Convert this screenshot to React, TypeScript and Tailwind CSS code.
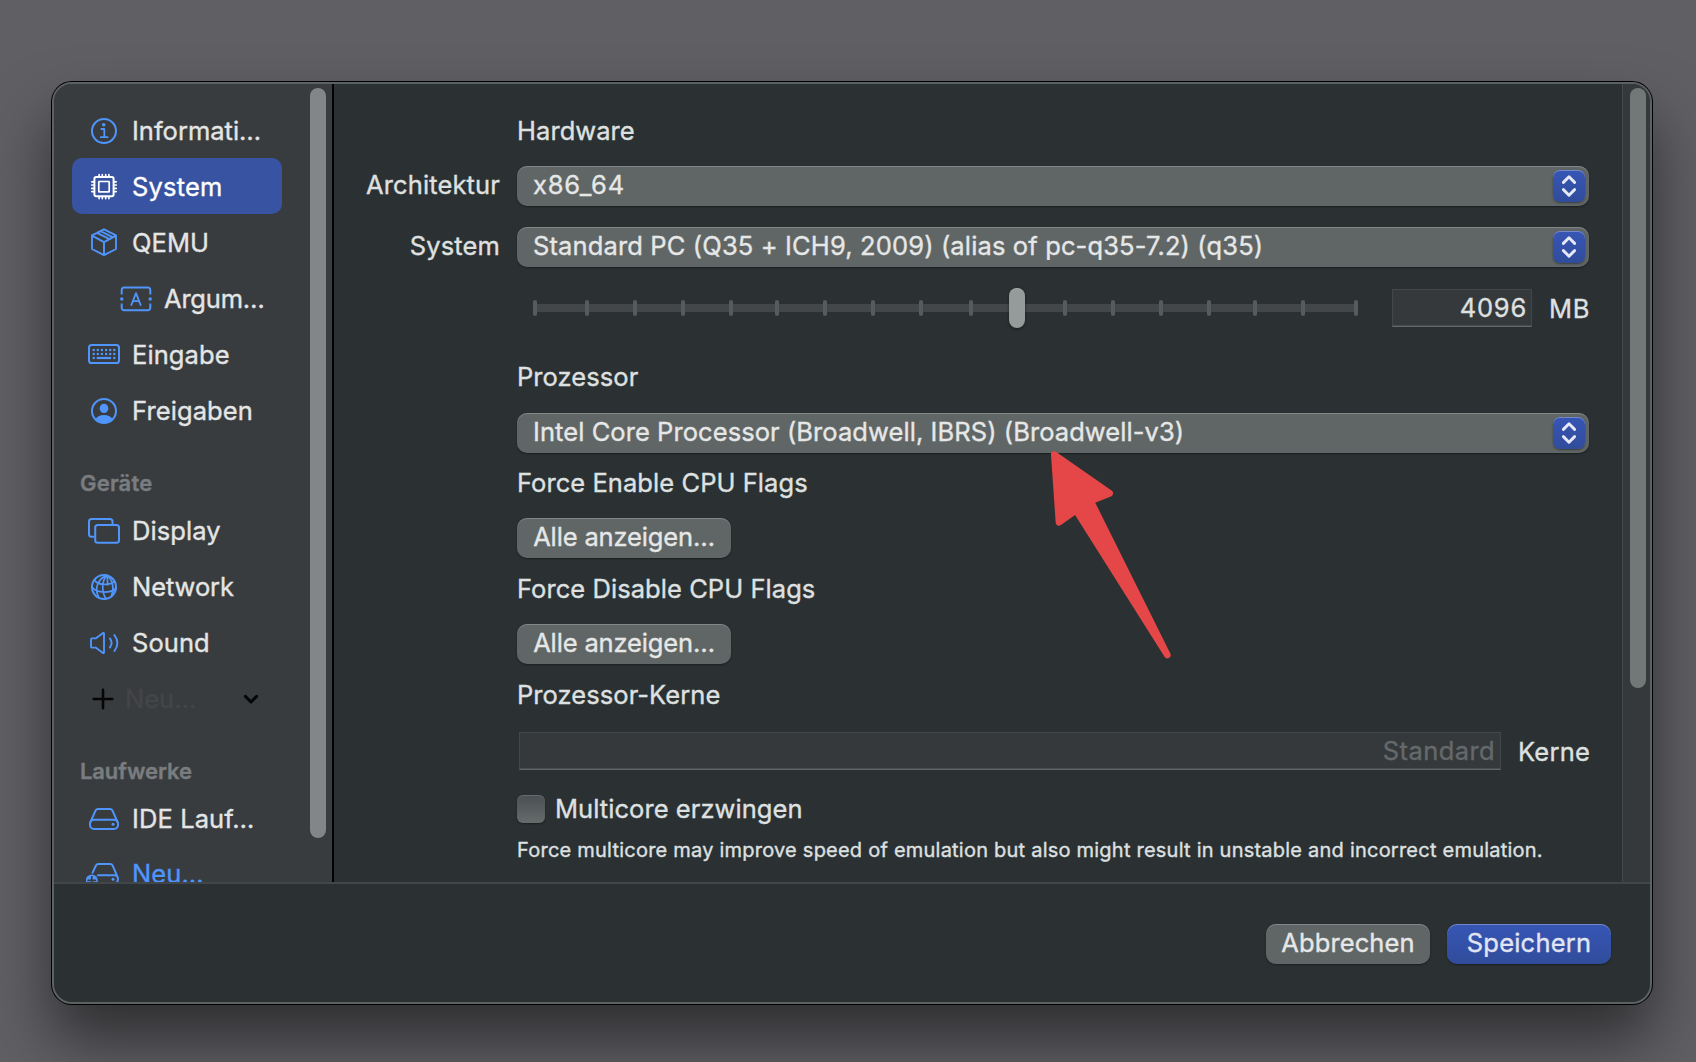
import type { ReactNode } from 'react';

/* ---------- icons (36×36, origin in the centre) ---------- */

function Icon({ children }: { children: ReactNode }) {
  return (
    <svg
      width="36"
      height="36"
      viewBox="-18 -18 36 36"
      fill="none"
      stroke="currentColor"
      strokeWidth="2"
      strokeLinecap="round"
      strokeLinejoin="round"
      className="shrink-0"
    >
      {children}
    </svg>
  );
}

const InfoIcon = () => (
  <Icon>
    <circle cx="0" cy="1" r="12" />
    <circle cx="-0.3" cy="-5.2" r="1.8" fill="currentColor" stroke="none" />
    <path d="M-2.6 -1H0.3V7M-3.2 7.2H3.6" strokeWidth="1.8" />
  </Icon>
);

const CpuIcon = () => (
  <Icon>
    <rect x="-9.6" y="-8.9" width="19.2" height="19.2" rx="1.8" strokeWidth="2" />
    <rect x="-5.2" y="-4.5" width="10.4" height="10.4" rx="0.5" strokeWidth="1.7" />
    <path
      strokeWidth="1.7"
      d="M-4.9 -9.5V-11.3M-1.7 -9.5V-11.3M1.7 -9.5V-11.3M4.9 -9.5V-11.3M-4.9 11V12.6M-1.7 11V12.6M1.7 11V12.6M4.9 11V12.6M-10.2 -4.2H-12.2M-10.2 -1H-12.2M-10.2 2.4H-12.2M-10.2 5.6H-12.2M10.2 -4.2H12.2M10.2 -1H12.2M10.2 2.4H12.2M10.2 5.6H12.2"
    />
  </Icon>
);

const BoxIcon = () => (
  <Icon>
    <path d="M0 -12.7L12 -6.6V7L0 13.2L-12 7V-6.6ZM-12 -6.4L0 0.2L12 -6.4M0 0.2V13M-7 -9.2L5.6 -2.9M-3.6 -11L8.8 -4.7" strokeWidth="1.9" />
  </Icon>
);

const TextboxIcon = () => (
  <Icon>
    <path d="M-14.3 -3.6V-8.4A2.5 2.5 0 0 1 -11.8 -10.4H11.8A2.5 2.5 0 0 1 14.3 -8.4V-3.6M-14.3 5.6V10A2.5 2.5 0 0 0 -11.8 12.2H11.8A2.5 2.5 0 0 0 14.3 10V5.6" strokeWidth="2" strokeLinecap="butt" />
    <circle cx="-14.2" cy="1" r="1.7" fill="currentColor" stroke="none" />
    <circle cx="14.2" cy="1" r="1.7" fill="currentColor" stroke="none" />
    <path d="M-4.6 7L0 -4.8L4.6 7M-3 3.2H3" strokeWidth="1.8" />
  </Icon>
);

const keyColumns = [-10.3, -6.2, -2.1, 2.1, 6.2, 10.3];
const KeyboardIcon = () => (
  <Icon>
    <rect x="-15" y="-9" width="30" height="18" rx="2.6" />
    <g fill="currentColor" stroke="none">
      {keyColumns.map((x) => (
        <g key={x}>
          <rect x={x - 1.1} y="-5.1" width="2.2" height="2.2" />
          <rect x={x - 1.1} y="-1.1" width="2.2" height="2.2" />
        </g>
      ))}
      <rect x="-11.4" y="2.9" width="2.2" height="2.2" />
      <rect x="-7.3" y="2.9" width="14.4" height="2.2" />
      <rect x="9.2" y="2.9" width="2.2" height="2.2" />
    </g>
  </Icon>
);

const PersonIcon = () => (
  <Icon>
    <circle cx="0" cy="1" r="12" />
    <ellipse cx="0" cy="-1.6" rx="4.3" ry="4.7" fill="currentColor" stroke="none" />
    <path d="M-8.4 9C-7 6.4 -3.6 5 0 5S7 6.4 8.4 9A11.8 11.8 0 0 1 -8.4 9Z" fill="currentColor" stroke="none" />
  </Icon>
);

const DisplayIcon = () => (
  <Icon>
    <path d="M-10.5 5.8H-12.5A2.5 2.5 0 0 1 -15 3.3V-9.5A2.5 2.5 0 0 1 -12.5 -12H6A2.5 2.5 0 0 1 8.5 -9.5V-7.5" />
    <rect x="-8.8" y="-6" width="23.8" height="17.8" rx="2.6" />
  </Icon>
);

const GlobeIcon = () => (
  <Icon>
    <circle cx="0" cy="0" r="12" />
    <path
      strokeWidth="1.7"
      d="M3 -11.6C-4.5 -9 -11 0 -5 10.6M3 -11.6C-2 -7 -3 4 2 11.8M3 -11.6C9 -7 10.5 2 7.5 9M3 -11.6C3.5 -8 3.6 -5 3.6 -2M-9.5 -7C-6 -1 6 -2 10.5 -5.5M-12 0C-7 7 7 6 12 1.5"
    />
  </Icon>
);

const SpeakerIcon = () => (
  <Icon>
    <path d="M-13 -3.6Q-13 -4.6 -12 -4.6H-8.4L-1.6 -9.6Q0 -10.6 0 -9.2V9.2Q0 10.6 -1.6 9.6L-8.4 4.6H-12Q-13 4.6 -13 3.6Z" strokeWidth="1.9" />
    <path d="M5.9 -4.6Q9.3 0 5.9 4.6M10.4 -8Q16.4 0 10.4 8" strokeWidth="1.9" />
  </Icon>
);

const DriveIcon = () => (
  <Icon>
    <path d="M-13.6 3.2L-8.6 -8.2Q-7.8 -10 -5.8 -10H5.8Q7.8 -10 8.6 -8.2L13.6 3.2" />
    <rect x="-14" y="0.8" width="28" height="9.2" rx="4" />
    <circle cx="9" cy="5.3" r="1.5" fill="currentColor" stroke="none" />
  </Icon>
);

const DriveAddIcon = () => (
  <Icon>
    <path d="M-11.4 -2.4L-8.2 -9.2Q-7.4 -11 -5.4 -11H6Q8 -11 8.8 -9.2L13.6 2.2M-6 0.2H10Q14 0.2 14 4Q14 8 10 9H-6" />
    <circle cx="9" cy="4.3" r="1.5" fill="currentColor" stroke="none" />
    <circle cx="-12.2" cy="5.4" r="6" fill="currentColor" stroke="none" />
    <path d="M-12.2 1.8V9M-15.8 5.4H-8.6" stroke="#393c3f" strokeWidth="1.8" />
  </Icon>
);

/* ---------- sidebar ---------- */

function Item({
  icon,
  label,
  selected,
  indent,
  tracking = 'tracking-[0.08px]',
  color = 'text-[#e4e5e5]',
  nudge = 'pt-0',
}: {
  icon: ReactNode;
  label: string;
  selected?: boolean;
  indent?: boolean;
  tracking?: string;
  color?: string;
  nudge?: string;
}) {
  return (
    <div
      className={`flex h-14 w-[210px] shrink-0 items-center gap-[10px] rounded-[10px] ${
        indent ? 'pl-[46px]' : 'pl-[14px]'
      } ${selected ? 'bg-[#3853a1] text-white' : 'text-[#4f95fc]'}`}
    >
      {icon}
      <span className={`whitespace-nowrap ${nudge} ${tracking} ${selected ? 'text-white' : color}`}>{label}</span>
    </div>
  );
}

function SectionTitle({ children, className = '' }: { children: ReactNode; className?: string }) {
  return (
    <div className={`flex shrink-0 items-center pl-2 text-[22px] font-semibold text-[#797d80] ${className}`}>
      {children}
    </div>
  );
}

function Sidebar() {
  return (
    <aside className="flex w-[280px] shrink-0 overflow-hidden border-r-2 border-black bg-[#393c3f]">
      <nav className="flex w-64 flex-col pt-[18px] pl-[18px]">
        <Item icon={<InfoIcon />} label="Informati…" nudge="pt-0.5" tracking="tracking-[0px]" />
        <Item icon={<CpuIcon />} label="System" selected nudge="pt-0.5" tracking="tracking-[0.2px]" />
        <Item icon={<BoxIcon />} label="QEMU" nudge="pt-0.5" />
        <Item icon={<TextboxIcon />} label="Argum…" indent nudge="pt-0.5" tracking="tracking-[-0.2px]" />
        <Item icon={<KeyboardIcon />} label="Eingabe" nudge="pt-0.5" tracking="tracking-[0.1px]" />
        <Item icon={<PersonIcon />} label="Freigaben" nudge="pt-0.5" tracking="tracking-[0.1px]" />
        <SectionTitle className="h-[65px] pt-[24px] tracking-[0.2px]">Geräte</SectionTitle>
        <Item icon={<DisplayIcon />} label="Display" />
        <Item icon={<GlobeIcon />} label="Network" tracking="tracking-[-0.08px]" />
        <Item icon={<SpeakerIcon />} label="Sound" />
        <div className="flex h-14 shrink-0 items-center text-[#444548]">
          <svg width="22" height="22" viewBox="-11 -11 22 22" className="ml-5" stroke="#050505" strokeWidth="2.6" strokeLinecap="round">
            <path d="M0 -9.3V9.3M-9.3 0H9.3" />
          </svg>
          <span className="ml-[11px] w-[69px] tracking-[0px]">Neu…</span>
          <svg width="16" height="12" viewBox="-8 -6 16 12" className="ml-[49px]" fill="none" stroke="#050505" strokeWidth="3" strokeLinecap="round" strokeLinejoin="round">
            <path d="M-5.6 -2.6L0 3L5.6 -2.6" />
          </svg>
        </div>
        <SectionTitle className="h-16 pt-[24px] tracking-[-0.1px]">Laufwerke</SectionTitle>
        <Item icon={<DriveIcon />} label="IDE Lauf…" tracking="tracking-[0.1px]" />
        <Item icon={<DriveAddIcon />} label="Neu…" color="text-[#4f95fc]" nudge="pb-0.5" />
      </nav>
      <div className="mt-1 h-[750px] w-4 rounded-full bg-[#838689]" />
    </aside>
  );
}

/* ---------- form ---------- */

const raised = 'bg-[#606665] shadow-[0_1px_2px_rgba(0,0,0,0.4),inset_0_1px_0_rgba(255,255,255,0.22)]';

function Select({ value, tracking = 'tracking-[0.07px]', inset = 'pl-4' }: { value: string; tracking?: string; inset?: string }) {
  return (
    <div className={`flex h-10 w-[1072px] items-center justify-between rounded-[10px] pr-1 text-[#e6e7e7] ${inset} ${raised}`}>
      <span className={`-mt-[3px] ${tracking}`}>{value}</span>
      <div className="flex size-8 items-center justify-center rounded-[7px] bg-linear-to-b from-[#3756b5] to-[#304c9b] shadow-[0_1px_2px_rgba(0,0,0,0.4),inset_0_1px_0_rgba(255,255,255,0.3)]">
        <svg width="20" height="26" viewBox="-10 -13 20 26" fill="none" stroke="#e6e9f5" strokeWidth="2.9" strokeLinecap="round" strokeLinejoin="round">
          <path d="M-5.6 -3.6L0 -9.2L5.6 -3.6M-5.6 3.6L0 9.2L5.6 3.6" />
        </svg>
      </div>
    </div>
  );
}

function Row({ label, className = '', children }: { label?: string; className?: string; children: ReactNode }) {
  return (
    <div className={`flex items-center ${className}`}>
      <div className="-mt-[3px] w-[166px] shrink-0 text-right tracking-[0.12px]">{label}</div>
      <div className="ml-[17px] flex items-center">{children}</div>
    </div>
  );
}

function Title({ children, className = '' }: { children: ReactNode; className?: string }) {
  return <Row className={`h-10 ${className}`}>{children}</Row>;
}

function ShowAllButton() {
  return (
    <button className={`flex h-10 w-[214px] items-center justify-center rounded-[10px] pb-[3px] tracking-[-0.15px] text-[#e6e7e7] ${raised}`}>
      Alle anzeigen…
    </button>
  );
}

const ticks = [0, 52, 100, 148, 196, 242, 290, 338, 386, 436, 530, 578, 626, 674, 720, 768, 821];

function MemorySlider() {
  return (
    <div className="relative ml-4 flex h-10 w-[825px] items-center">
      <div className="h-2 w-full bg-[#43474a]" />
      {ticks.map((x) => (
        <span key={x} className="absolute top-3 h-4 w-1 rounded-full bg-[#565b5e]" style={{ left: x }} />
      ))}
      <span className="absolute top-0 left-[476px] h-10 w-4 rounded-full bg-[#959a9a] shadow-[0_1px_3px_rgba(0,0,0,0.5),inset_0_1px_0_rgba(255,255,255,0.2)]" />
    </div>
  );
}

const field = 'flex h-[38px] items-center justify-end border border-[#43474a] border-b-[#626768] bg-[#35393c] shadow-[inset_0_-1px_0_#484d4f]';

function Form() {
  return (
    <main className="flex-1 pt-[27px] text-[#dfe0e0]">
      <Title>Hardware</Title>
      <Row label="Architektur" className="mt-[15px]">
        <Select value="x86_64" tracking="tracking-[0.8px]" />
      </Row>
      <Row label="System" className="mt-[21px]">
        <Select value="Standard PC (Q35 + ICH9, 2009) (alias of pc-q35-7.2) (q35)" tracking="tracking-[0.14px]" />
      </Row>
      <Row className="mt-[21px]">
        <MemorySlider />
        <div className={`${field} ml-[34px] w-[140px] pr-1 tracking-[0.75px]`}>4096</div>
        <span className="ml-[17px] pt-0.5 tracking-[0.8px]">MB</span>
      </Row>
      <Title className="mt-[29px]">Prozessor</Title>
      <Row className="mt-4">
        <Select value="Intel Core Processor (Broadwell, IBRS) (Broadwell-v3)" />
      </Row>
      <Title className="mt-[10px]">Force Enable CPU Flags</Title>
      <Row className="mt-[15px]">
        <ShowAllButton />
      </Row>
      <Title className="mt-[11px]">Force Disable CPU Flags</Title>
      <Row className="mt-[15px]">
        <ShowAllButton />
      </Row>
      <Title className="mt-[11px]">Prozessor-Kerne</Title>
      <Row className="mt-[17px]">
        <div className={`${field} ml-0.5 w-[982px] pr-[5px] tracking-[0.4px] text-[#64696a]`}>Standard</div>
        <span className="ml-[17px] pt-0.5 tracking-[0.25px]">Kerne</span>
      </Row>
      <Row className="mt-[20px] h-[38px]">
        <span className="h-7 w-7 rounded-[6px] bg-linear-to-b from-[#4a5053] to-[#666b6b] shadow-[0_1px_2px_rgba(0,0,0,0.4),inset_0_1px_0_rgba(255,255,255,0.15)]" />
        <span className="ml-[10px]">Multicore erzwingen</span>
      </Row>
      <Row className="mt-[7px] h-[30px]">
        <p className="text-[20px] tracking-[0.225px] whitespace-nowrap">
          Force multicore may improve speed of emulation but also might result in unstable and incorrect emulation.
        </p>
      </Row>
    </main>
  );
}

/* ---------- window ---------- */

function PointerArrow() {
  return (
    <svg className="absolute top-[430px] left-[980px]" width="240" height="240" viewBox="0 0 720 720" fill="#e54748" stroke="#e54748" strokeWidth="20" strokeLinejoin="round">
      <path d="M223 74L389 190L332 213L562 675L288 241L237 277Z" />
    </svg>
  );
}

export default function App() {
  return (
    <div className="relative h-[1062px] w-[1696px] overflow-hidden bg-[#605f64] pt-[82px] pl-[52px] font-[Inter,'Liberation_Sans',sans-serif] text-[25.5px] leading-[30px] tracking-[0.06px] [-webkit-text-stroke:0.35px_currentColor]">
      <div className="flex h-[922px] w-[1600px] flex-col overflow-hidden rounded-[20px] border-2 border-[#5c6162] bg-[#2b3133] shadow-[0_0_0_1px_#000,0_36px_62px_rgba(0,0,0,0.52)]">
        <div className="flex h-[798px] overflow-hidden">
          <Sidebar />
          <Form />
          <div className="w-7 border-l border-[#45494b] bg-[#35393b] pt-1 pl-[7px]">
            <div className="h-[600px] w-4 rounded-full bg-[#727877]" />
          </div>
        </div>
        <footer className="flex h-[120px] items-start justify-end gap-[17px] border-t-2 border-[#414648] pt-10 pr-[39px]">
          <button className={`flex h-10 w-[164px] items-center justify-center rounded-[10px] pb-[3px] tracking-[0.1px] text-[#e6e7e7] ${raised}`}>
            Abbrechen
          </button>
          <button className="flex h-10 w-[164px] items-center justify-center rounded-[10px] bg-linear-to-b from-[#3756b5] to-[#304c9b] pb-[3px] tracking-[0.2px] text-[#e1e5f3] shadow-[0_1px_2px_rgba(0,0,0,0.4),inset_0_1px_0_rgba(255,255,255,0.3)]">
            Speichern
          </button>
        </footer>
      </div>
      <PointerArrow />
    </div>
  );
}
